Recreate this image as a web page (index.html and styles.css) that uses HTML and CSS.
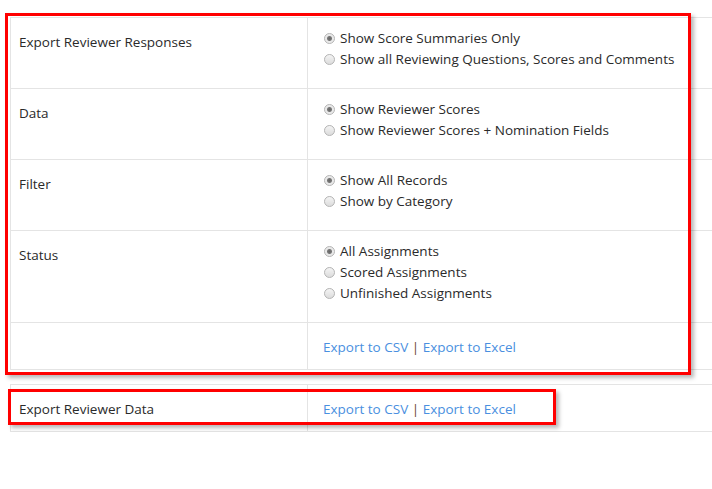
FILE: index.html
```html
<!DOCTYPE html>
<html lang="en">

<head>
    <meta charset="UTF-8">
    <title>Export Reviewer Responses</title>
    <link rel="stylesheet" href="styles.css">
</head>

<body>
    <main class="page">
        <table class="export-table">
            <tr>
                <td class="label">Export Reviewer Responses</td>
                <td class="options">
                    <label class="choice"><input type="radio" name="responses" checked> Show Score Summaries Only</label>
                    <label class="choice"><input type="radio" name="responses"> Show all Reviewing Questions, Scores and Comments</label>
                </td>
            </tr>
            <tr>
                <td class="label">Data</td>
                <td class="options">
                    <label class="choice"><input type="radio" name="data" checked> Show Reviewer Scores</label>
                    <label class="choice"><input type="radio" name="data"> Show Reviewer Scores + Nomination Fields</label>
                </td>
            </tr>
            <tr>
                <td class="label">Filter</td>
                <td class="options">
                    <label class="choice"><input type="radio" name="filter" checked> Show All Records</label>
                    <label class="choice"><input type="radio" name="filter"> Show by Category</label>
                </td>
            </tr>
            <tr>
                <td class="label">Status</td>
                <td class="options">
                    <label class="choice"><input type="radio" name="status" checked> All Assignments</label>
                    <label class="choice"><input type="radio" name="status"> Scored Assignments</label>
                    <label class="choice"><input type="radio" name="status"> Unfinished Assignments</label>
                </td>
            </tr>
            <tr>
                <td class="label"></td>
                <td class="links">
                    <a href="#">Export to CSV</a> <span class="sep">|</span> <a href="#">Export to Excel</a>
                </td>
            </tr>
        </table>

        <table class="export-table second">
            <tr>
                <td class="label">Export Reviewer Data</td>
                <td class="links">
                    <a href="#">Export to CSV</a> <span class="sep">|</span> <a href="#">Export to Excel</a>
                </td>
            </tr>
        </table>

        <!-- annotation boxes drawn over the screenshot -->
        <div class="mark mark-main"></div>
        <div class="mark mark-data"></div>
    </main>
</body>

</html>
```

FILE: styles.css
```css
body {
    margin: 0;
    background-color: #fff;
    font-family: 'Open Sans', 'DejaVu Sans', sans-serif;
    font-size: 13.5px;
    line-height: 21px;
    color: #2a2a2a;
    overflow: hidden;
}

.page {
    position: relative;
    padding: 17px 0 0 10px;
}

.export-table {
    width: 702px;
    border-collapse: collapse;
    table-layout: fixed;
}

.export-table.second {
    margin-top: 14px;
}

.export-table td {
    border-top: 1px solid #e4e4e4;
    border-bottom: 1px solid #e4e4e4;
    vertical-align: top;
    padding: 14px 10px 11px 15px;
}

.export-table td.label {
    width: 278px;
    padding-left: 8px;
    border-left: 1px solid #e4e4e4;
    border-right: 1px solid #e4e4e4;
}

.export-table td.options {
    padding-top: 10px;
    padding-bottom: 18px;
}

.choice {
    display: flex;
    align-items: center;
    height: 21px;
}

.choice input {
    appearance: none;
    -webkit-appearance: none;
    width: 11px;
    height: 11px;
    margin: 0 5px 0 1px;
    border: 1px solid #b5b5b5;
    border-radius: 50%;
    background: linear-gradient(#f4f4f4, #dcdcdc);
    box-sizing: border-box;
    flex-shrink: 0;
}

.choice input:checked {
    background: radial-gradient(circle, #666 0, #777 2px, #e8e8e8 3px, #f0f0f0 100%);
}

.links a {
    color: #4a8fe0;
    text-decoration: none;
}

.links .sep {
    color: #6b4a2f;
}

.mark {
    position: absolute;
    border: 3px solid #f00;
    box-shadow: 3px 3px 4px rgba(0, 0, 0, 0.28);
}

.mark-main {
    left: 5px;
    top: 13px;
    width: 680px;
    height: 356px;
}

.mark-data {
    left: 8px;
    top: 389px;
    width: 542px;
    height: 30px;
}
```
